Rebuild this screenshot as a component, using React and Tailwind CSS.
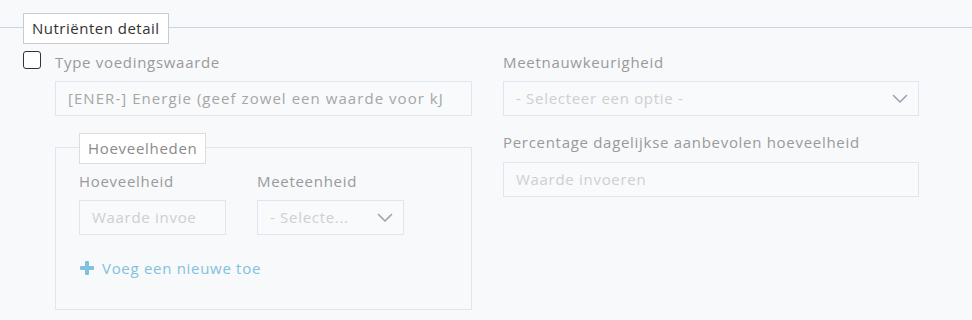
import React from "react";

function Chevron({ className = "" }) {
  return (
    <svg className={className} width="16" height="10" viewBox="0 0 16 10" fill="none">
      <path d="M1.5 1.5 L8 8 L14.5 1.5" stroke="#9ca3af" strokeWidth="1.6" strokeLinecap="round" strokeLinejoin="round" />
    </svg>
  );
}

const font = { fontFamily: '"Open Sans", "Liberation Sans", sans-serif' };

export default function App() {
  return (
    <div className="w-[972px] h-[320px] bg-[#f8f9fb] overflow-hidden text-[15px] tracking-[0.7px]" style={font}>
      <div className="relative pt-[13px]">
        <div className="absolute left-0 right-0 top-[27px] h-px bg-[#c9d5e4]" />
        <div className="relative ml-[23px] inline-flex h-[31px] items-center border border-[#cccccc] bg-white px-[8px] text-[#333333] tracking-[0.5px]">
          Nutriënten detail
        </div>
      </div>
      <div className="flex pl-[23px] pt-[7px]">
        <div className="w-[32px]">
          <div className="h-[18px] w-[18px] rounded-[3px] border border-[#333] bg-white" />
        </div>
        <div className="flex gap-[31px]">
          <div className="w-[417px]">
            <div className="h-[22px] leading-[22px] text-[#9a9a9a]">Type voedingswaarde</div>
            <div className="mt-[8px] flex h-[35px] items-center overflow-hidden whitespace-nowrap border border-[#dde6f1] bg-[#f8fafc] px-[12px] text-[#a6a6a6] tracking-[1.05px]">
              [ENER-] Energie (geef zowel een waarde voor kJ
            </div>
            <div className="relative mt-[31px] h-[163px] border border-[#dde6f1]">
              <div className="absolute left-[23px] top-[-15px] flex h-[31px] items-center border border-[#dddddd] bg-white px-[8px] text-[#8a8a8a]">
                Hoeveelheden
              </div>
              <div className="flex gap-[31px] px-[23px] pt-[22px]">
                <div className="w-[147px]">
                  <div className="h-[22px] leading-[22px] text-[#9a9a9a]">Hoeveelheid</div>
                  <div className="mt-[8px] flex h-[35px] items-center overflow-hidden whitespace-nowrap border border-[#dde6f1] bg-[#f8fafc] px-[12px] text-[#cfcfcf]">
                    Waarde invoe
                  </div>
                </div>
                <div className="w-[147px]">
                  <div className="h-[22px] leading-[22px] text-[#9a9a9a]">Meeteenheid</div>
                  <div className="mt-[8px] flex h-[35px] items-center justify-between border border-[#dde6f1] bg-[#f8fafc] pl-[12px] pr-[10px] text-[#cfcfcf]">
                    <span>- Selecte...</span>
                    <Chevron />
                  </div>
                </div>
              </div>
              <div className="mt-[22px] flex items-center gap-[8px] pl-[24px] text-[#80c2dd]">
                <svg width="14" height="14" viewBox="0 0 14 14">
                  <rect x="5" y="0" width="4" height="14" rx="1" fill="#80c2dd" />
                  <rect x="0" y="5" width="14" height="4" rx="1" fill="#80c2dd" />
                </svg>
                <span>Voeg een nieuwe toe</span>
              </div>
            </div>
          </div>
          <div className="w-[416px]">
            <div className="h-[22px] leading-[22px] text-[#9a9a9a]">Meetnauwkeurigheid</div>
            <div className="mt-[8px] flex h-[35px] items-center justify-between border border-[#dde6f1] bg-[#f8fafc] pl-[12px] pr-[10px] text-[#cfcfcf]">
              <span>- Selecteer een optie -</span>
              <Chevron />
            </div>
            <div className="mt-[15px] h-[22px] leading-[22px] text-[#9a9a9a]">Percentage dagelijkse aanbevolen hoeveelheid</div>
            <div className="mt-[9px] flex h-[35px] items-center border border-[#dde6f1] bg-[#f8fafc] px-[12px] text-[#cfcfcf]">
              Waarde invoeren
            </div>
          </div>
        </div>
      </div>
    </div>
  );
}
